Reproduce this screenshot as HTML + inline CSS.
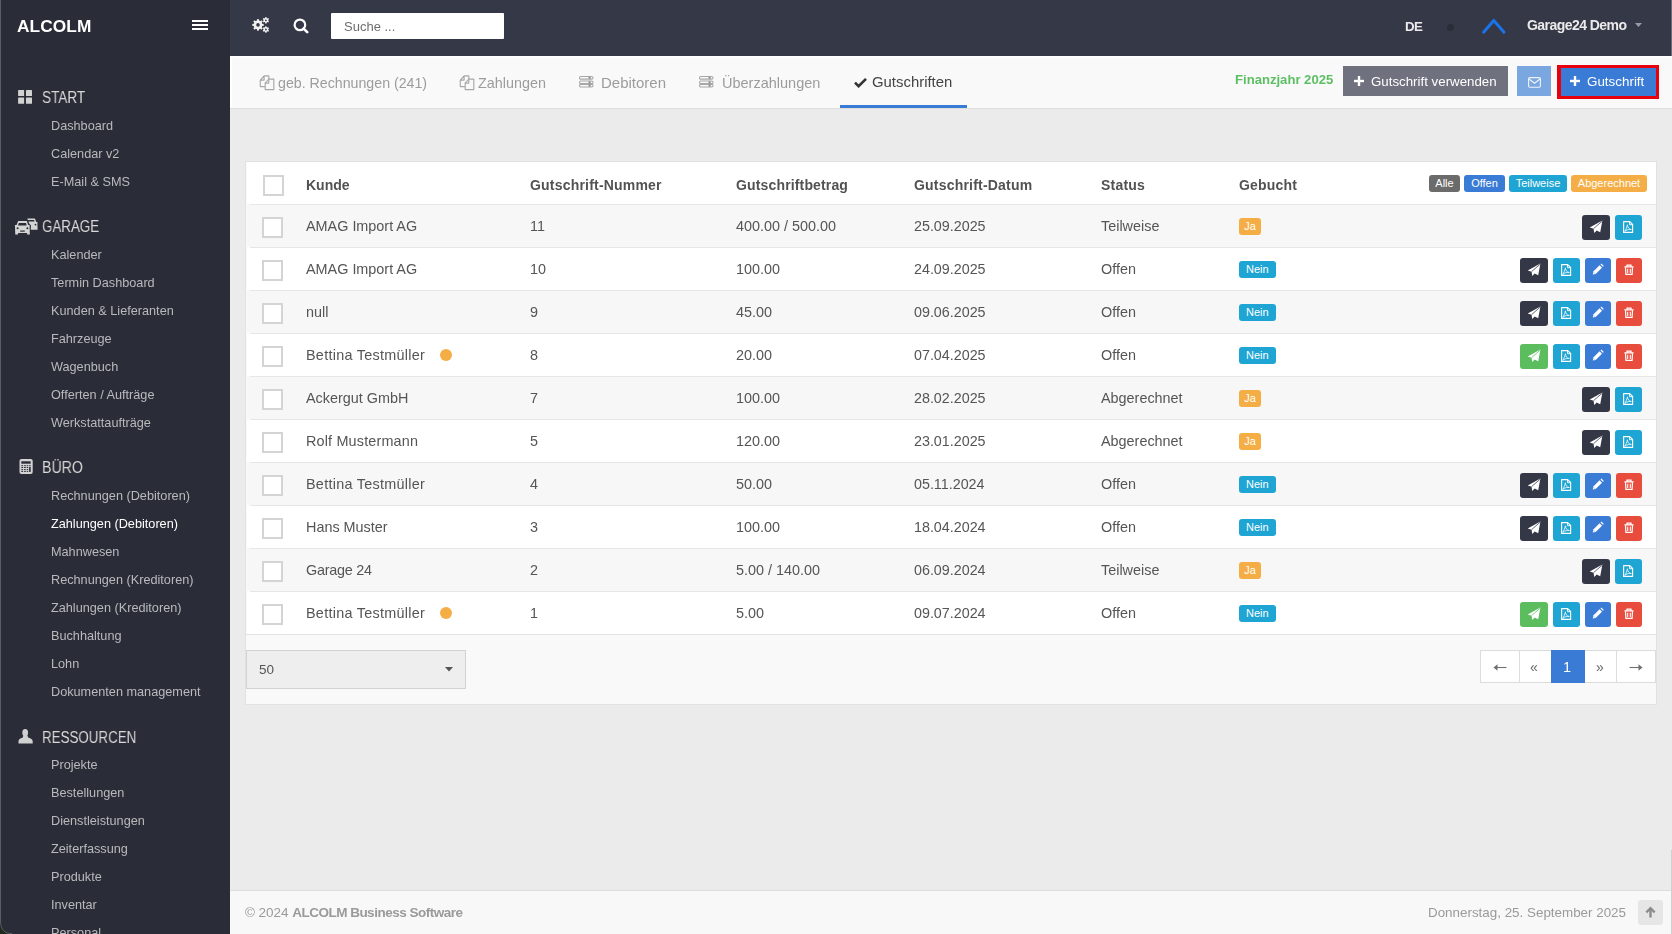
<!DOCTYPE html>
<html><head><meta charset="utf-8"><title>ALCOLM</title>
<style>
html,body{margin:0;padding:0;width:1672px;height:934px;overflow:hidden;background:#ebebeb;}
body{position:relative;font-family:"Liberation Sans", sans-serif;}
.t{position:absolute;white-space:nowrap;will-change:transform;}
.b{position:absolute;}
.bd{color:#fff;text-align:center;font-family:"Liberation Sans", sans-serif;}
</style></head><body>
<div class="b" style="left:0px;top:0px;width:230px;height:934px;background:#2a2d37;"></div>
<div class="b" style="left:0px;top:0px;width:1px;height:934px;background:#5a5d66;"></div>
<svg class="b" style="left:0px;top:922px" width="14" height="12" viewBox="0 0 14 12"><path d="M0 0 V12 H12 C5 12 0.8 8 0.8 0 Z" fill="#1d2a1c"/><path d="M0.6 0 C0.6 8 5 11.6 12 11.6" fill="none" stroke="#5a5d66" stroke-width="1"/></svg>
<div class="t" style="left:17.40px;top:14.01px;font-size:17.3px;line-height:24px;font-weight:bold;color:#ffffff;letter-spacing:0.1px;">ALCOLM</div>
<div class="b" style="left:192px;top:20px;width:16px;height:2px;background:#fff;"></div>
<div class="b" style="left:192px;top:24px;width:16px;height:2px;background:#fff;"></div>
<div class="b" style="left:192px;top:28px;width:16px;height:2px;background:#fff;"></div>
<svg class="b" style="left:18px;top:90px" width="14" height="14" viewBox="0 0 14 14"><g fill="#d2d2d2"><rect x="0.1" y="0" width="6" height="6" rx="0.5"/><rect x="8" y="0" width="6" height="6" rx="0.5"/><rect x="0.1" y="7.6" width="6" height="6.1" rx="0.5"/><rect x="8" y="7.6" width="6" height="6.1" rx="0.5"/></g></svg>
<div class="t" style="left:42.00px;top:87.46px;font-size:16px;line-height:22px;font-weight:normal;color:#d8d8d8;transform:scaleX(0.845);transform-origin:0 0;">START</div>
<div class="t" style="left:50.90px;top:116.90px;font-size:12.7px;line-height:18px;font-weight:normal;color:#b9babd;">Dashboard</div>
<div class="t" style="left:50.90px;top:144.90px;font-size:12.7px;line-height:18px;font-weight:normal;color:#b9babd;">Calendar v2</div>
<div class="t" style="left:50.90px;top:172.90px;font-size:12.7px;line-height:18px;font-weight:normal;color:#b9babd;">E-Mail &amp; SMS</div>
<div class="t" style="left:42.00px;top:216.46px;font-size:16px;line-height:22px;font-weight:normal;color:#d8d8d8;transform:scaleX(0.835);transform-origin:0 0;">GARAGE</div>
<div class="t" style="left:50.90px;top:245.90px;font-size:12.7px;line-height:18px;font-weight:normal;color:#b9babd;">Kalender</div>
<div class="t" style="left:50.90px;top:273.90px;font-size:12.7px;line-height:18px;font-weight:normal;color:#b9babd;">Termin Dashboard</div>
<div class="t" style="left:50.90px;top:301.90px;font-size:12.7px;line-height:18px;font-weight:normal;color:#b9babd;">Kunden &amp; Lieferanten</div>
<div class="t" style="left:50.90px;top:329.90px;font-size:12.7px;line-height:18px;font-weight:normal;color:#b9babd;">Fahrzeuge</div>
<div class="t" style="left:50.90px;top:357.90px;font-size:12.7px;line-height:18px;font-weight:normal;color:#b9babd;">Wagenbuch</div>
<div class="t" style="left:50.90px;top:385.90px;font-size:12.7px;line-height:18px;font-weight:normal;color:#b9babd;">Offerten / Aufträge</div>
<div class="t" style="left:50.90px;top:413.90px;font-size:12.7px;line-height:18px;font-weight:normal;color:#b9babd;">Werkstattaufträge</div>
<div class="t" style="left:42.00px;top:457.46px;font-size:16px;line-height:22px;font-weight:normal;color:#d8d8d8;transform:scaleX(0.885);transform-origin:0 0;">BÜRO</div>
<div class="t" style="left:50.90px;top:486.90px;font-size:12.7px;line-height:18px;font-weight:normal;color:#b9babd;">Rechnungen (Debitoren)</div>
<div class="t" style="left:50.90px;top:514.90px;font-size:12.7px;line-height:18px;font-weight:normal;color:#ffffff;">Zahlungen (Debitoren)</div>
<div class="t" style="left:50.90px;top:542.90px;font-size:12.7px;line-height:18px;font-weight:normal;color:#b9babd;">Mahnwesen</div>
<div class="t" style="left:50.90px;top:570.90px;font-size:12.7px;line-height:18px;font-weight:normal;color:#b9babd;">Rechnungen (Kreditoren)</div>
<div class="t" style="left:50.90px;top:598.90px;font-size:12.7px;line-height:18px;font-weight:normal;color:#b9babd;">Zahlungen (Kreditoren)</div>
<div class="t" style="left:50.90px;top:626.90px;font-size:12.7px;line-height:18px;font-weight:normal;color:#b9babd;">Buchhaltung</div>
<div class="t" style="left:50.90px;top:654.90px;font-size:12.7px;line-height:18px;font-weight:normal;color:#b9babd;">Lohn</div>
<div class="t" style="left:50.90px;top:682.90px;font-size:12.7px;line-height:18px;font-weight:normal;color:#b9babd;">Dokumenten management</div>
<div class="t" style="left:42.00px;top:726.96px;font-size:16px;line-height:22px;font-weight:normal;color:#d8d8d8;transform:scaleX(0.835);transform-origin:0 0;">RESSOURCEN</div>
<div class="t" style="left:50.90px;top:756.40px;font-size:12.7px;line-height:18px;font-weight:normal;color:#b9babd;">Projekte</div>
<div class="t" style="left:50.90px;top:784.40px;font-size:12.7px;line-height:18px;font-weight:normal;color:#b9babd;">Bestellungen</div>
<div class="t" style="left:50.90px;top:812.40px;font-size:12.7px;line-height:18px;font-weight:normal;color:#b9babd;">Dienstleistungen</div>
<div class="t" style="left:50.90px;top:840.40px;font-size:12.7px;line-height:18px;font-weight:normal;color:#b9babd;">Zeiterfassung</div>
<div class="t" style="left:50.90px;top:868.40px;font-size:12.7px;line-height:18px;font-weight:normal;color:#b9babd;">Produkte</div>
<div class="t" style="left:50.90px;top:896.40px;font-size:12.7px;line-height:18px;font-weight:normal;color:#b9babd;">Inventar</div>
<div class="t" style="left:50.90px;top:924.40px;font-size:12.7px;line-height:18px;font-weight:normal;color:#b9babd;">Personal</div>
<svg class="b" style="left:14px;top:218px" width="25" height="18" viewBox="0 0 25 18">
<g fill="#d4d4d4">
<path d="M13.3 0.4 H20.9 L22.3 3.9 H23.6 L23.4 5 L23.6 11.7 H21 V12 L20.9 11.7 H16.5 L14.6 7 L14.6 3.9 Z"/>
</g>
<path d="M3.4 3.4 L4.1 2.5 H13 L16 6.6 L17 7.2 L16.4 16.8 H13 L13 15 H4.1 L4.1 16.8 H0.9 L0.9 6.9 Z" fill="#2a2d37"/>
<g fill="#d4d4d4">
<path d="M4.1 3 H12.8 L14.2 6.9 H15.8 L15.6 8 L15.8 15 V16.5 H13.1 V15 H4.1 V16.5 H1.2 V15 L1 8 L0.8 6.9 H2.6 Z"/>
</g>
<g fill="#2a2d37">
<path d="M4.8 5.1 H12 L12.7 7.4 H4 Z"/>
<circle cx="3.6" cy="10.3" r="1"/><circle cx="13.4" cy="10.3" r="1"/>
<rect x="6.2" y="12.5" width="4.6" height="1.2"/>
<path d="M14.2 2.1 H20 L20.6 3.6 H13.8 Z"/>
<circle cx="21.5" cy="6.6" r="0.9"/>
</g>
</svg>
<svg class="b" style="left:19px;top:458px" width="14" height="17" viewBox="0 0 14 17"><rect x="0.5" y="0.9" width="13.2" height="15.1" rx="2" fill="#d4d4d4"/><g fill="#2a2d37"><rect x="2.3" y="3.3" width="9.4" height="2.4"/><rect x="2.3" y="7.2" width="1.8" height="1"/><rect x="2.3" y="9.0" width="1.8" height="1"/><rect x="2.3" y="11.1" width="1.8" height="1"/><rect x="2.3" y="12.9" width="1.8" height="1"/><rect x="5.1" y="7.2" width="1.7" height="1"/><rect x="5.1" y="9.0" width="1.7" height="1"/><rect x="5.1" y="11.1" width="1.7" height="1"/><rect x="5.1" y="12.9" width="1.7" height="1"/><rect x="7.7" y="7.2" width="1.5" height="1"/><rect x="7.7" y="9.0" width="1.5" height="1"/><rect x="7.7" y="11.1" width="1.5" height="1"/><rect x="7.7" y="12.9" width="1.5" height="1"/><rect x="10.1" y="7.2" width="1.6" height="1"/><rect x="10.1" y="9.0" width="1.6" height="4.9"/></g></svg>
<svg class="b" style="left:18px;top:728.5px" width="15" height="15" viewBox="0 0 15 15">
<ellipse cx="7.2" cy="3.7" rx="2.9" ry="3.7" fill="#d0d0d0"/>
<path d="M5.3 6.5 L4.8 8.6 C2 9.4 0.5 10.5 0.5 12.5 V14.5 H14.7 V12.5 C14.7 10.5 13 9.4 10.2 8.6 L9.4 6.5 Z" fill="#d0d0d0"/>
</svg>
<div class="b" style="left:230px;top:0px;width:1442px;height:56px;background:#353846;"></div>
<svg class="b" style="left:251px;top:16px" width="20" height="18" viewBox="0 0 20 18"><g fill="#f2f2f2"><circle cx="7" cy="8.9" r="4.3"/><rect x="5.95" y="3.2" width="2.1" height="11.4" transform="rotate(0.0 7 8.9)"/><rect x="5.95" y="3.2" width="2.1" height="11.4" transform="rotate(45.0 7 8.9)"/><rect x="5.95" y="3.2" width="2.1" height="11.4" transform="rotate(90.0 7 8.9)"/><rect x="5.95" y="3.2" width="2.1" height="11.4" transform="rotate(135.0 7 8.9)"/><circle cx="14.9" cy="4.3" r="2.4"/><rect x="14.25" y="1.0" width="1.3" height="6.6" transform="rotate(0.0 14.9 4.3)"/><rect x="14.25" y="1.0" width="1.3" height="6.6" transform="rotate(60.0 14.9 4.3)"/><rect x="14.25" y="1.0" width="1.3" height="6.6" transform="rotate(120.0 14.9 4.3)"/><circle cx="14.9" cy="13.5" r="2.4"/><rect x="14.25" y="10.2" width="1.3" height="6.6" transform="rotate(0.0 14.9 13.5)"/><rect x="14.25" y="10.2" width="1.3" height="6.6" transform="rotate(60.0 14.9 13.5)"/><rect x="14.25" y="10.2" width="1.3" height="6.6" transform="rotate(120.0 14.9 13.5)"/></g><circle cx="7" cy="8.9" r="1.8" fill="#353846"/><circle cx="14.9" cy="4.3" r="0.9" fill="#353846"/><circle cx="14.9" cy="13.5" r="0.9" fill="#353846"/></svg>
<svg class="b" style="left:292.5px;top:17.5px" width="17" height="16" viewBox="0 0 17 16">
<circle cx="6.9" cy="6.9" r="5.3" fill="none" stroke="#fff" stroke-width="2.2"/>
<line x1="10.6" y1="10.6" x2="14.2" y2="14.2" stroke="#fff" stroke-width="2.6" stroke-linecap="round"/>
</svg>
<div class="b" style="left:331px;top:13px;width:173px;height:26px;background:#fff;border-radius:1px;"></div>
<div class="t" style="left:343.90px;top:17.90px;font-size:13px;line-height:18px;font-weight:normal;color:#6f6f6f;">Suche ...</div>
<div class="t" style="left:1405.40px;top:17.09px;font-size:13.3px;line-height:19px;font-weight:bold;color:#ebebeb;letter-spacing:-0.6px;">DE</div>
<div class="b" style="left:1446.5px;top:23.5px;width:7px;height:7px;background:#2a2d37;border-radius:50%;"></div>
<svg class="b" style="left:1481px;top:17px" width="26" height="18" viewBox="0 0 26 18">
<path d="M2.6 15.2 L12.8 3.4 L23 15.2" fill="none" stroke="#1a73e8" stroke-width="3" stroke-linecap="round" stroke-linejoin="round"/>
</svg>
<div class="t" style="left:1527.40px;top:15.45px;font-size:14px;line-height:20px;font-weight:bold;color:#ebebeb;letter-spacing:-0.55px;">Garage24 Demo</div>
<svg class="b" style="left:1634.5px;top:23px" width="7" height="4" viewBox="0 0 7 4"><path d="M0 0 H7 L3.5 4 Z" fill="#9a9ca5"/></svg>
<div class="b" style="left:230px;top:56px;width:1442px;height:52px;background:#f9f9f9;"></div>
<div class="b" style="left:230px;top:108px;width:1442px;height:1px;background:#dedede;"></div>
<div class="b" style="left:230px;top:56px;width:2px;height:52px;background:#ffffff;"></div>
<div class="b" style="left:230px;top:56px;width:1442px;height:2px;background:#ffffff;"></div>
<svg class="b" style="left:259px;top:75px" width="16" height="16" viewBox="0 0 16 16">
<path d="M1.3 5.1 L5.1 0.9 H9.8 V11.6 H1.3 Z M1.3 5.1 H5.1 V0.9" fill="none" stroke="#a8a8a8" stroke-width="1.15" stroke-linejoin="round"/>
<path d="M6.2 8.1 L9.8 4.1 H14.8 V14.6 H6.2 Z" fill="#f9f9f9" stroke="#a8a8a8" stroke-width="1.15" stroke-linejoin="round"/>
<path d="M6.2 8.1 H9.8 V4.1" fill="none" stroke="#a8a8a8" stroke-width="1.15" stroke-linejoin="round"/>
</svg>
<div class="t" style="left:278.40px;top:72.88px;font-size:14.2px;line-height:20px;font-weight:normal;color:#9c9c9c;">geb. Rechnungen (241)</div>
<svg class="b" style="left:458.5px;top:75px" width="16" height="16" viewBox="0 0 16 16">
<path d="M1.3 5.1 L5.1 0.9 H9.8 V11.6 H1.3 Z M1.3 5.1 H5.1 V0.9" fill="none" stroke="#a8a8a8" stroke-width="1.15" stroke-linejoin="round"/>
<path d="M6.2 8.1 L9.8 4.1 H14.8 V14.6 H6.2 Z" fill="#f9f9f9" stroke="#a8a8a8" stroke-width="1.15" stroke-linejoin="round"/>
<path d="M6.2 8.1 H9.8 V4.1" fill="none" stroke="#a8a8a8" stroke-width="1.15" stroke-linejoin="round"/>
</svg>
<div class="t" style="left:477.90px;top:72.81px;font-size:14.4px;line-height:20px;font-weight:normal;color:#9c9c9c;">Zahlungen</div>
<svg class="b" style="left:578.6px;top:76px" width="15" height="12" viewBox="0 0 15 12">
<g fill="none" stroke="#a8a8a8" stroke-width="1.1">
<rect x="0.55" y="0.55" width="13.4" height="2.6" rx="1.2"/>
<rect x="0.55" y="5" width="13.4" height="2.6" rx="1.2"/>
<rect x="0.55" y="8.4" width="13.4" height="2.6" rx="1.2"/>
</g>
<g fill="#8a8a8a"><rect x="9.6" y="0.9" width="2" height="1.9"/><rect x="9.6" y="5.35" width="2" height="1.9"/><rect x="9.6" y="8.75" width="2" height="1.9"/></g>
</svg>
<div class="t" style="left:601.40px;top:72.10px;font-size:15px;line-height:21px;font-weight:normal;color:#9c9c9c;">Debitoren</div>
<svg class="b" style="left:698.6px;top:76px" width="15" height="12" viewBox="0 0 15 12">
<g fill="none" stroke="#a8a8a8" stroke-width="1.1">
<rect x="0.55" y="0.55" width="13.4" height="2.6" rx="1.2"/>
<rect x="0.55" y="5" width="13.4" height="2.6" rx="1.2"/>
<rect x="0.55" y="8.4" width="13.4" height="2.6" rx="1.2"/>
</g>
<g fill="#8a8a8a"><rect x="9.6" y="0.9" width="2" height="1.9"/><rect x="9.6" y="5.35" width="2" height="1.9"/><rect x="9.6" y="8.75" width="2" height="1.9"/></g>
</svg>
<div class="t" style="left:721.90px;top:72.78px;font-size:14.5px;line-height:20px;font-weight:normal;color:#9c9c9c;">Überzahlungen</div>
<svg class="b" style="left:854px;top:76.5px" width="13" height="11" viewBox="0 0 13 11">
<path d="M1 5.6 L4.6 9.2 L12 1.8" fill="none" stroke="#333" stroke-width="2.6"/>
</svg>
<div class="t" style="left:872.40px;top:72.14px;font-size:14.9px;line-height:21px;font-weight:normal;color:#444;">Gutschriften</div>
<div class="b" style="left:840px;top:105px;width:127px;height:3px;background:#3a7bd5;"></div>
<div class="t" style="left:1235.40px;top:71.16px;font-size:13.1px;line-height:18px;font-weight:bold;color:#5cbf62;">Finanzjahr 2025</div>
<div class="b" style="left:1343px;top:66px;width:165px;height:30px;background:#6f727e;"></div>
<svg class="b" style="left:1353.5px;top:76px" width="10" height="10" viewBox="0 0 10 10"><rect x="3.8" y="0" width="2.4" height="10" fill="#fff"/><rect x="0" y="3.8" width="10" height="2.4" fill="#fff"/></svg>
<div class="t" style="left:1371.40px;top:71.89px;font-size:13.3px;line-height:19px;font-weight:normal;color:#fff;">Gutschrift verwenden</div>
<div class="b" style="left:1517px;top:66px;width:34px;height:30px;background:#7aa7e0;"></div>
<svg class="b" style="left:1527.5px;top:76.5px" width="13" height="11" viewBox="0 0 13 11">
<rect x="0.6" y="0.6" width="11.8" height="9.6" rx="1.2" fill="none" stroke="#eef3fb" stroke-width="1.15"/>
<path d="M1 2 L6.5 6.2 L12 2" fill="none" stroke="#eef3fb" stroke-width="1.15"/>
</svg>
<div class="b" style="left:1557px;top:64.5px;width:102px;height:34px;background:#e8000c;"></div>
<div class="b" style="left:1560.5px;top:67.5px;width:95px;height:28px;background:#3a7bd5;"></div>
<svg class="b" style="left:1570px;top:76px" width="10" height="10" viewBox="0 0 10 10"><rect x="3.8" y="0" width="2.4" height="10" fill="#fff"/><rect x="0" y="3.8" width="10" height="2.4" fill="#fff"/></svg>
<div class="t" style="left:1587.40px;top:71.86px;font-size:13.4px;line-height:19px;font-weight:normal;color:#fff;">Gutschrift</div>
<div class="b" style="left:230px;top:109px;width:1442px;height:781px;background:#ebebeb;"></div>
<div class="b" style="left:245px;top:161px;width:1412px;height:544px;background:#f9f9f9;box-shadow:0 0 0 1px #e2e2e2 inset;"></div>
<div class="b" style="left:247px;top:162px;width:1409px;height:42px;background:#ffffff;"></div>
<div class="b" style="left:263px;top:175px;width:21px;height:21px;background:#fff;border:2px solid #d4d4d4;box-sizing:border-box;"></div>
<div class="t" style="left:305.90px;top:174.95px;font-size:14px;line-height:20px;font-weight:bold;color:#525252;">Kunde</div>
<div class="t" style="left:530.40px;top:174.95px;font-size:14px;line-height:20px;font-weight:bold;color:#525252;letter-spacing:0.2px;">Gutschrift-Nummer</div>
<div class="t" style="left:736.40px;top:174.95px;font-size:14px;line-height:20px;font-weight:bold;color:#525252;letter-spacing:0.15px;">Gutschriftbetrag</div>
<div class="t" style="left:914.40px;top:174.95px;font-size:14px;line-height:20px;font-weight:bold;color:#525252;letter-spacing:0.2px;">Gutschrift-Datum</div>
<div class="t" style="left:1101.00px;top:174.95px;font-size:14px;line-height:20px;font-weight:bold;color:#525252;letter-spacing:0.2px;">Status</div>
<div class="t" style="left:1239.00px;top:174.95px;font-size:14px;line-height:20px;font-weight:bold;color:#525252;letter-spacing:0.2px;">Gebucht</div>
<div class="b bd" style="left:1429px;top:175px;width:31px;height:17px;background:#6b6b6b;border-radius:3px;font-size:11px;line-height:17px;">Alle</div>
<div class="b bd" style="left:1464px;top:175px;width:41px;height:17px;background:#3a7bd5;border-radius:3px;font-size:11px;line-height:17px;">Offen</div>
<div class="b bd" style="left:1509px;top:175px;width:58px;height:17px;background:#1fa5d4;border-radius:3px;font-size:11px;line-height:17px;">Teilweise</div>
<div class="b bd" style="left:1571px;top:175px;width:76px;height:17px;background:#f5ae45;border-radius:3px;font-size:11px;line-height:17px;">Abgerechnet</div>
<div class="b" style="left:247px;top:204px;width:1409px;height:43px;background:#f7f7f7;"></div>
<div class="b" style="left:250px;top:204px;width:1406px;height:1px;background:#e6e6e6;"></div>
<div class="b" style="left:262px;top:217px;width:21px;height:21px;background:#fff;border:2px solid #d4d4d4;box-sizing:border-box;"></div>
<div class="t" style="left:305.90px;top:216.01px;font-size:14.4px;line-height:20px;font-weight:normal;color:#555;">AMAG Import AG</div>
<div class="t" style="left:530.40px;top:216.01px;font-size:14.4px;line-height:20px;font-weight:normal;color:#555;">11</div>
<div class="t" style="left:736.40px;top:216.01px;font-size:14.4px;line-height:20px;font-weight:normal;color:#555;">400.00 / 500.00</div>
<div class="t" style="left:914.40px;top:216.05px;font-size:14.3px;line-height:20px;font-weight:normal;color:#555;">25.09.2025</div>
<div class="t" style="left:1101.00px;top:216.01px;font-size:14.4px;line-height:20px;font-weight:normal;color:#555;">Teilweise</div>
<div class="b bd" style="left:1239px;top:218px;width:22px;height:17px;background:#f5ae45;border-radius:3px;font-size:11px;line-height:17px;">Ja</div>
<div class="b" style="left:1582px;top:215px;width:28px;height:24.5px;background:#343746;border-radius:3px;"></div>
<svg class="b" style="left:1582px;top:215px" width="28" height="25" viewBox="0 0 28 25">
<path d="M20.4 5.4 L7.7 12.4 L11.6 13.8 L12.2 18.1 L14.7 15.6 L18.2 17.3 Z" fill="#fff"/>
<path d="M11.6 13.6 L20 6.3" stroke="#343746" stroke-width="0.75" fill="none"/>
</svg>
<div class="b" style="left:1615px;top:215px;width:27px;height:24.5px;background:#1fa5d4;border-radius:3px;"></div>
<svg class="b" style="left:1615px;top:215px" width="27" height="25" viewBox="0 0 27 25">
<path d="M8.6 6.6 H14.7 L17.6 9.5 V17.4 H8.6 Z" fill="none" stroke="#fff" stroke-width="1.15" stroke-linejoin="round"/>
<path d="M14.5 6.6 V9.7 H17.6" fill="none" stroke="#fff" stroke-width="0.9"/>
<path d="M9.8 16.2 C11 14.6 11.8 12.6 12.4 9.8 C12.8 12.8 14 14.2 16.3 14.5 C14.5 14.2 12 14.6 9.8 16.2" fill="none" stroke="#fff" stroke-width="0.8"/>
</svg>
<div class="b" style="left:247px;top:247px;width:1409px;height:43px;background:#ffffff;"></div>
<div class="b" style="left:250px;top:247px;width:1406px;height:1px;background:#e6e6e6;"></div>
<div class="b" style="left:262px;top:260px;width:21px;height:21px;background:#fff;border:2px solid #d4d4d4;box-sizing:border-box;"></div>
<div class="t" style="left:305.90px;top:259.01px;font-size:14.4px;line-height:20px;font-weight:normal;color:#555;">AMAG Import AG</div>
<div class="t" style="left:530.40px;top:259.01px;font-size:14.4px;line-height:20px;font-weight:normal;color:#555;">10</div>
<div class="t" style="left:736.40px;top:259.01px;font-size:14.4px;line-height:20px;font-weight:normal;color:#555;">100.00</div>
<div class="t" style="left:914.40px;top:259.05px;font-size:14.3px;line-height:20px;font-weight:normal;color:#555;">24.09.2025</div>
<div class="t" style="left:1101.00px;top:259.01px;font-size:14.4px;line-height:20px;font-weight:normal;color:#555;">Offen</div>
<div class="b bd" style="left:1239px;top:261px;width:36.5px;height:17px;background:#1fa5d4;border-radius:3px;font-size:11px;line-height:17px;">Nein</div>
<div class="b" style="left:1520px;top:258px;width:28px;height:24.5px;background:#343746;border-radius:3px;"></div>
<svg class="b" style="left:1520px;top:258px" width="28" height="25" viewBox="0 0 28 25">
<path d="M20.4 5.4 L7.7 12.4 L11.6 13.8 L12.2 18.1 L14.7 15.6 L18.2 17.3 Z" fill="#fff"/>
<path d="M11.6 13.6 L20 6.3" stroke="#343746" stroke-width="0.75" fill="none"/>
</svg>
<div class="b" style="left:1553px;top:258px;width:27px;height:24.5px;background:#1fa5d4;border-radius:3px;"></div>
<svg class="b" style="left:1553px;top:258px" width="27" height="25" viewBox="0 0 27 25">
<path d="M8.6 6.6 H14.7 L17.6 9.5 V17.4 H8.6 Z" fill="none" stroke="#fff" stroke-width="1.15" stroke-linejoin="round"/>
<path d="M14.5 6.6 V9.7 H17.6" fill="none" stroke="#fff" stroke-width="0.9"/>
<path d="M9.8 16.2 C11 14.6 11.8 12.6 12.4 9.8 C12.8 12.8 14 14.2 16.3 14.5 C14.5 14.2 12 14.6 9.8 16.2" fill="none" stroke="#fff" stroke-width="0.8"/>
</svg>
<div class="b" style="left:1585px;top:258px;width:26px;height:24.5px;background:#3a7bd5;border-radius:3px;"></div>
<svg class="b" style="left:1585px;top:258px" width="26" height="25" viewBox="0 0 26 25">
<path d="M7.8 16.6 L8.3 13.6 L14.6 7.3 L17 9.7 L10.7 16 Z" fill="#fff"/>
<path d="M15.5 6.4 L16.4 5.6 L18.8 8 L17.9 8.8 Z" fill="#fff"/>
<path d="M8.9 14.6 L9.8 15.5" stroke="#3a7bd5" stroke-width="0.8"/>
</svg>
<div class="b" style="left:1616px;top:258px;width:26px;height:24.5px;background:#e84c3d;border-radius:3px;"></div>
<svg class="b" style="left:1616px;top:258px" width="26" height="25" viewBox="0 0 26 25">
<path d="M8.4 8.8 H17.6 M11 8.8 V7.1 H15 V8.8" fill="none" stroke="#fff" stroke-width="1.2"/>
<path d="M9.5 9.3 L9.9 16.4 H16.1 L16.5 9.3" fill="none" stroke="#fff" stroke-width="1.2"/>
<path d="M11.7 10.7 V15 M14.3 10.7 V15" stroke="#fff" stroke-width="1.05"/>
</svg>
<div class="b" style="left:247px;top:290px;width:1409px;height:43px;background:#f7f7f7;"></div>
<div class="b" style="left:250px;top:290px;width:1406px;height:1px;background:#e6e6e6;"></div>
<div class="b" style="left:262px;top:303px;width:21px;height:21px;background:#fff;border:2px solid #d4d4d4;box-sizing:border-box;"></div>
<div class="t" style="left:305.90px;top:302.01px;font-size:14.4px;line-height:20px;font-weight:normal;color:#555;">null</div>
<div class="t" style="left:530.40px;top:302.01px;font-size:14.4px;line-height:20px;font-weight:normal;color:#555;">9</div>
<div class="t" style="left:736.40px;top:302.01px;font-size:14.4px;line-height:20px;font-weight:normal;color:#555;">45.00</div>
<div class="t" style="left:914.40px;top:302.05px;font-size:14.3px;line-height:20px;font-weight:normal;color:#555;">09.06.2025</div>
<div class="t" style="left:1101.00px;top:302.01px;font-size:14.4px;line-height:20px;font-weight:normal;color:#555;">Offen</div>
<div class="b bd" style="left:1239px;top:304px;width:36.5px;height:17px;background:#1fa5d4;border-radius:3px;font-size:11px;line-height:17px;">Nein</div>
<div class="b" style="left:1520px;top:301px;width:28px;height:24.5px;background:#343746;border-radius:3px;"></div>
<svg class="b" style="left:1520px;top:301px" width="28" height="25" viewBox="0 0 28 25">
<path d="M20.4 5.4 L7.7 12.4 L11.6 13.8 L12.2 18.1 L14.7 15.6 L18.2 17.3 Z" fill="#fff"/>
<path d="M11.6 13.6 L20 6.3" stroke="#343746" stroke-width="0.75" fill="none"/>
</svg>
<div class="b" style="left:1553px;top:301px;width:27px;height:24.5px;background:#1fa5d4;border-radius:3px;"></div>
<svg class="b" style="left:1553px;top:301px" width="27" height="25" viewBox="0 0 27 25">
<path d="M8.6 6.6 H14.7 L17.6 9.5 V17.4 H8.6 Z" fill="none" stroke="#fff" stroke-width="1.15" stroke-linejoin="round"/>
<path d="M14.5 6.6 V9.7 H17.6" fill="none" stroke="#fff" stroke-width="0.9"/>
<path d="M9.8 16.2 C11 14.6 11.8 12.6 12.4 9.8 C12.8 12.8 14 14.2 16.3 14.5 C14.5 14.2 12 14.6 9.8 16.2" fill="none" stroke="#fff" stroke-width="0.8"/>
</svg>
<div class="b" style="left:1585px;top:301px;width:26px;height:24.5px;background:#3a7bd5;border-radius:3px;"></div>
<svg class="b" style="left:1585px;top:301px" width="26" height="25" viewBox="0 0 26 25">
<path d="M7.8 16.6 L8.3 13.6 L14.6 7.3 L17 9.7 L10.7 16 Z" fill="#fff"/>
<path d="M15.5 6.4 L16.4 5.6 L18.8 8 L17.9 8.8 Z" fill="#fff"/>
<path d="M8.9 14.6 L9.8 15.5" stroke="#3a7bd5" stroke-width="0.8"/>
</svg>
<div class="b" style="left:1616px;top:301px;width:26px;height:24.5px;background:#e84c3d;border-radius:3px;"></div>
<svg class="b" style="left:1616px;top:301px" width="26" height="25" viewBox="0 0 26 25">
<path d="M8.4 8.8 H17.6 M11 8.8 V7.1 H15 V8.8" fill="none" stroke="#fff" stroke-width="1.2"/>
<path d="M9.5 9.3 L9.9 16.4 H16.1 L16.5 9.3" fill="none" stroke="#fff" stroke-width="1.2"/>
<path d="M11.7 10.7 V15 M14.3 10.7 V15" stroke="#fff" stroke-width="1.05"/>
</svg>
<div class="b" style="left:247px;top:333px;width:1409px;height:43px;background:#ffffff;"></div>
<div class="b" style="left:250px;top:333px;width:1406px;height:1px;background:#e6e6e6;"></div>
<div class="b" style="left:262px;top:346px;width:21px;height:21px;background:#fff;border:2px solid #d4d4d4;box-sizing:border-box;"></div>
<div class="t" style="left:305.90px;top:345.01px;font-size:14.4px;line-height:20px;font-weight:normal;color:#555;letter-spacing:0.27px;">Bettina Testmüller</div>
<div class="b" style="left:439.5px;top:349px;width:12px;height:12px;background:#f5ae45;border-radius:50%;"></div>
<div class="t" style="left:530.40px;top:345.01px;font-size:14.4px;line-height:20px;font-weight:normal;color:#555;">8</div>
<div class="t" style="left:736.40px;top:345.01px;font-size:14.4px;line-height:20px;font-weight:normal;color:#555;">20.00</div>
<div class="t" style="left:914.40px;top:345.05px;font-size:14.3px;line-height:20px;font-weight:normal;color:#555;">07.04.2025</div>
<div class="t" style="left:1101.00px;top:345.01px;font-size:14.4px;line-height:20px;font-weight:normal;color:#555;">Offen</div>
<div class="b bd" style="left:1239px;top:347px;width:36.5px;height:17px;background:#1fa5d4;border-radius:3px;font-size:11px;line-height:17px;">Nein</div>
<div class="b" style="left:1520px;top:344px;width:28px;height:24.5px;background:#5cbd5f;border-radius:3px;"></div>
<svg class="b" style="left:1520px;top:344px" width="28" height="25" viewBox="0 0 28 25">
<path d="M20.4 5.4 L7.7 12.4 L11.6 13.8 L12.2 18.1 L14.7 15.6 L18.2 17.3 Z" fill="#fff"/>
<path d="M11.6 13.6 L20 6.3" stroke="#5cbd5f" stroke-width="0.75" fill="none"/>
</svg>
<div class="b" style="left:1553px;top:344px;width:27px;height:24.5px;background:#1fa5d4;border-radius:3px;"></div>
<svg class="b" style="left:1553px;top:344px" width="27" height="25" viewBox="0 0 27 25">
<path d="M8.6 6.6 H14.7 L17.6 9.5 V17.4 H8.6 Z" fill="none" stroke="#fff" stroke-width="1.15" stroke-linejoin="round"/>
<path d="M14.5 6.6 V9.7 H17.6" fill="none" stroke="#fff" stroke-width="0.9"/>
<path d="M9.8 16.2 C11 14.6 11.8 12.6 12.4 9.8 C12.8 12.8 14 14.2 16.3 14.5 C14.5 14.2 12 14.6 9.8 16.2" fill="none" stroke="#fff" stroke-width="0.8"/>
</svg>
<div class="b" style="left:1585px;top:344px;width:26px;height:24.5px;background:#3a7bd5;border-radius:3px;"></div>
<svg class="b" style="left:1585px;top:344px" width="26" height="25" viewBox="0 0 26 25">
<path d="M7.8 16.6 L8.3 13.6 L14.6 7.3 L17 9.7 L10.7 16 Z" fill="#fff"/>
<path d="M15.5 6.4 L16.4 5.6 L18.8 8 L17.9 8.8 Z" fill="#fff"/>
<path d="M8.9 14.6 L9.8 15.5" stroke="#3a7bd5" stroke-width="0.8"/>
</svg>
<div class="b" style="left:1616px;top:344px;width:26px;height:24.5px;background:#e84c3d;border-radius:3px;"></div>
<svg class="b" style="left:1616px;top:344px" width="26" height="25" viewBox="0 0 26 25">
<path d="M8.4 8.8 H17.6 M11 8.8 V7.1 H15 V8.8" fill="none" stroke="#fff" stroke-width="1.2"/>
<path d="M9.5 9.3 L9.9 16.4 H16.1 L16.5 9.3" fill="none" stroke="#fff" stroke-width="1.2"/>
<path d="M11.7 10.7 V15 M14.3 10.7 V15" stroke="#fff" stroke-width="1.05"/>
</svg>
<div class="b" style="left:247px;top:376px;width:1409px;height:43px;background:#f7f7f7;"></div>
<div class="b" style="left:250px;top:376px;width:1406px;height:1px;background:#e6e6e6;"></div>
<div class="b" style="left:262px;top:389px;width:21px;height:21px;background:#fff;border:2px solid #d4d4d4;box-sizing:border-box;"></div>
<div class="t" style="left:305.90px;top:388.01px;font-size:14.4px;line-height:20px;font-weight:normal;color:#555;">Ackergut GmbH</div>
<div class="t" style="left:530.40px;top:388.01px;font-size:14.4px;line-height:20px;font-weight:normal;color:#555;">7</div>
<div class="t" style="left:736.40px;top:388.01px;font-size:14.4px;line-height:20px;font-weight:normal;color:#555;">100.00</div>
<div class="t" style="left:914.40px;top:388.05px;font-size:14.3px;line-height:20px;font-weight:normal;color:#555;">28.02.2025</div>
<div class="t" style="left:1101.00px;top:388.01px;font-size:14.4px;line-height:20px;font-weight:normal;color:#555;">Abgerechnet</div>
<div class="b bd" style="left:1239px;top:390px;width:22px;height:17px;background:#f5ae45;border-radius:3px;font-size:11px;line-height:17px;">Ja</div>
<div class="b" style="left:1582px;top:387px;width:28px;height:24.5px;background:#343746;border-radius:3px;"></div>
<svg class="b" style="left:1582px;top:387px" width="28" height="25" viewBox="0 0 28 25">
<path d="M20.4 5.4 L7.7 12.4 L11.6 13.8 L12.2 18.1 L14.7 15.6 L18.2 17.3 Z" fill="#fff"/>
<path d="M11.6 13.6 L20 6.3" stroke="#343746" stroke-width="0.75" fill="none"/>
</svg>
<div class="b" style="left:1615px;top:387px;width:27px;height:24.5px;background:#1fa5d4;border-radius:3px;"></div>
<svg class="b" style="left:1615px;top:387px" width="27" height="25" viewBox="0 0 27 25">
<path d="M8.6 6.6 H14.7 L17.6 9.5 V17.4 H8.6 Z" fill="none" stroke="#fff" stroke-width="1.15" stroke-linejoin="round"/>
<path d="M14.5 6.6 V9.7 H17.6" fill="none" stroke="#fff" stroke-width="0.9"/>
<path d="M9.8 16.2 C11 14.6 11.8 12.6 12.4 9.8 C12.8 12.8 14 14.2 16.3 14.5 C14.5 14.2 12 14.6 9.8 16.2" fill="none" stroke="#fff" stroke-width="0.8"/>
</svg>
<div class="b" style="left:247px;top:419px;width:1409px;height:43px;background:#ffffff;"></div>
<div class="b" style="left:250px;top:419px;width:1406px;height:1px;background:#e6e6e6;"></div>
<div class="b" style="left:262px;top:432px;width:21px;height:21px;background:#fff;border:2px solid #d4d4d4;box-sizing:border-box;"></div>
<div class="t" style="left:305.90px;top:431.01px;font-size:14.4px;line-height:20px;font-weight:normal;color:#555;letter-spacing:0.17px;">Rolf Mustermann</div>
<div class="t" style="left:530.40px;top:431.01px;font-size:14.4px;line-height:20px;font-weight:normal;color:#555;">5</div>
<div class="t" style="left:736.40px;top:431.01px;font-size:14.4px;line-height:20px;font-weight:normal;color:#555;">120.00</div>
<div class="t" style="left:914.40px;top:431.05px;font-size:14.3px;line-height:20px;font-weight:normal;color:#555;">23.01.2025</div>
<div class="t" style="left:1101.00px;top:431.01px;font-size:14.4px;line-height:20px;font-weight:normal;color:#555;">Abgerechnet</div>
<div class="b bd" style="left:1239px;top:433px;width:22px;height:17px;background:#f5ae45;border-radius:3px;font-size:11px;line-height:17px;">Ja</div>
<div class="b" style="left:1582px;top:430px;width:28px;height:24.5px;background:#343746;border-radius:3px;"></div>
<svg class="b" style="left:1582px;top:430px" width="28" height="25" viewBox="0 0 28 25">
<path d="M20.4 5.4 L7.7 12.4 L11.6 13.8 L12.2 18.1 L14.7 15.6 L18.2 17.3 Z" fill="#fff"/>
<path d="M11.6 13.6 L20 6.3" stroke="#343746" stroke-width="0.75" fill="none"/>
</svg>
<div class="b" style="left:1615px;top:430px;width:27px;height:24.5px;background:#1fa5d4;border-radius:3px;"></div>
<svg class="b" style="left:1615px;top:430px" width="27" height="25" viewBox="0 0 27 25">
<path d="M8.6 6.6 H14.7 L17.6 9.5 V17.4 H8.6 Z" fill="none" stroke="#fff" stroke-width="1.15" stroke-linejoin="round"/>
<path d="M14.5 6.6 V9.7 H17.6" fill="none" stroke="#fff" stroke-width="0.9"/>
<path d="M9.8 16.2 C11 14.6 11.8 12.6 12.4 9.8 C12.8 12.8 14 14.2 16.3 14.5 C14.5 14.2 12 14.6 9.8 16.2" fill="none" stroke="#fff" stroke-width="0.8"/>
</svg>
<div class="b" style="left:247px;top:462px;width:1409px;height:43px;background:#f7f7f7;"></div>
<div class="b" style="left:250px;top:462px;width:1406px;height:1px;background:#e6e6e6;"></div>
<div class="b" style="left:262px;top:475px;width:21px;height:21px;background:#fff;border:2px solid #d4d4d4;box-sizing:border-box;"></div>
<div class="t" style="left:305.90px;top:474.01px;font-size:14.4px;line-height:20px;font-weight:normal;color:#555;letter-spacing:0.27px;">Bettina Testmüller</div>
<div class="t" style="left:530.40px;top:474.01px;font-size:14.4px;line-height:20px;font-weight:normal;color:#555;">4</div>
<div class="t" style="left:736.40px;top:474.01px;font-size:14.4px;line-height:20px;font-weight:normal;color:#555;">50.00</div>
<div class="t" style="left:914.40px;top:474.05px;font-size:14.3px;line-height:20px;font-weight:normal;color:#555;">05.11.2024</div>
<div class="t" style="left:1101.00px;top:474.01px;font-size:14.4px;line-height:20px;font-weight:normal;color:#555;">Offen</div>
<div class="b bd" style="left:1239px;top:476px;width:36.5px;height:17px;background:#1fa5d4;border-radius:3px;font-size:11px;line-height:17px;">Nein</div>
<div class="b" style="left:1520px;top:473px;width:28px;height:24.5px;background:#343746;border-radius:3px;"></div>
<svg class="b" style="left:1520px;top:473px" width="28" height="25" viewBox="0 0 28 25">
<path d="M20.4 5.4 L7.7 12.4 L11.6 13.8 L12.2 18.1 L14.7 15.6 L18.2 17.3 Z" fill="#fff"/>
<path d="M11.6 13.6 L20 6.3" stroke="#343746" stroke-width="0.75" fill="none"/>
</svg>
<div class="b" style="left:1553px;top:473px;width:27px;height:24.5px;background:#1fa5d4;border-radius:3px;"></div>
<svg class="b" style="left:1553px;top:473px" width="27" height="25" viewBox="0 0 27 25">
<path d="M8.6 6.6 H14.7 L17.6 9.5 V17.4 H8.6 Z" fill="none" stroke="#fff" stroke-width="1.15" stroke-linejoin="round"/>
<path d="M14.5 6.6 V9.7 H17.6" fill="none" stroke="#fff" stroke-width="0.9"/>
<path d="M9.8 16.2 C11 14.6 11.8 12.6 12.4 9.8 C12.8 12.8 14 14.2 16.3 14.5 C14.5 14.2 12 14.6 9.8 16.2" fill="none" stroke="#fff" stroke-width="0.8"/>
</svg>
<div class="b" style="left:1585px;top:473px;width:26px;height:24.5px;background:#3a7bd5;border-radius:3px;"></div>
<svg class="b" style="left:1585px;top:473px" width="26" height="25" viewBox="0 0 26 25">
<path d="M7.8 16.6 L8.3 13.6 L14.6 7.3 L17 9.7 L10.7 16 Z" fill="#fff"/>
<path d="M15.5 6.4 L16.4 5.6 L18.8 8 L17.9 8.8 Z" fill="#fff"/>
<path d="M8.9 14.6 L9.8 15.5" stroke="#3a7bd5" stroke-width="0.8"/>
</svg>
<div class="b" style="left:1616px;top:473px;width:26px;height:24.5px;background:#e84c3d;border-radius:3px;"></div>
<svg class="b" style="left:1616px;top:473px" width="26" height="25" viewBox="0 0 26 25">
<path d="M8.4 8.8 H17.6 M11 8.8 V7.1 H15 V8.8" fill="none" stroke="#fff" stroke-width="1.2"/>
<path d="M9.5 9.3 L9.9 16.4 H16.1 L16.5 9.3" fill="none" stroke="#fff" stroke-width="1.2"/>
<path d="M11.7 10.7 V15 M14.3 10.7 V15" stroke="#fff" stroke-width="1.05"/>
</svg>
<div class="b" style="left:247px;top:505px;width:1409px;height:43px;background:#ffffff;"></div>
<div class="b" style="left:250px;top:505px;width:1406px;height:1px;background:#e6e6e6;"></div>
<div class="b" style="left:262px;top:518px;width:21px;height:21px;background:#fff;border:2px solid #d4d4d4;box-sizing:border-box;"></div>
<div class="t" style="left:305.90px;top:517.01px;font-size:14.4px;line-height:20px;font-weight:normal;color:#555;">Hans Muster</div>
<div class="t" style="left:530.40px;top:517.01px;font-size:14.4px;line-height:20px;font-weight:normal;color:#555;">3</div>
<div class="t" style="left:736.40px;top:517.01px;font-size:14.4px;line-height:20px;font-weight:normal;color:#555;">100.00</div>
<div class="t" style="left:914.40px;top:517.05px;font-size:14.3px;line-height:20px;font-weight:normal;color:#555;">18.04.2024</div>
<div class="t" style="left:1101.00px;top:517.01px;font-size:14.4px;line-height:20px;font-weight:normal;color:#555;">Offen</div>
<div class="b bd" style="left:1239px;top:519px;width:36.5px;height:17px;background:#1fa5d4;border-radius:3px;font-size:11px;line-height:17px;">Nein</div>
<div class="b" style="left:1520px;top:516px;width:28px;height:24.5px;background:#343746;border-radius:3px;"></div>
<svg class="b" style="left:1520px;top:516px" width="28" height="25" viewBox="0 0 28 25">
<path d="M20.4 5.4 L7.7 12.4 L11.6 13.8 L12.2 18.1 L14.7 15.6 L18.2 17.3 Z" fill="#fff"/>
<path d="M11.6 13.6 L20 6.3" stroke="#343746" stroke-width="0.75" fill="none"/>
</svg>
<div class="b" style="left:1553px;top:516px;width:27px;height:24.5px;background:#1fa5d4;border-radius:3px;"></div>
<svg class="b" style="left:1553px;top:516px" width="27" height="25" viewBox="0 0 27 25">
<path d="M8.6 6.6 H14.7 L17.6 9.5 V17.4 H8.6 Z" fill="none" stroke="#fff" stroke-width="1.15" stroke-linejoin="round"/>
<path d="M14.5 6.6 V9.7 H17.6" fill="none" stroke="#fff" stroke-width="0.9"/>
<path d="M9.8 16.2 C11 14.6 11.8 12.6 12.4 9.8 C12.8 12.8 14 14.2 16.3 14.5 C14.5 14.2 12 14.6 9.8 16.2" fill="none" stroke="#fff" stroke-width="0.8"/>
</svg>
<div class="b" style="left:1585px;top:516px;width:26px;height:24.5px;background:#3a7bd5;border-radius:3px;"></div>
<svg class="b" style="left:1585px;top:516px" width="26" height="25" viewBox="0 0 26 25">
<path d="M7.8 16.6 L8.3 13.6 L14.6 7.3 L17 9.7 L10.7 16 Z" fill="#fff"/>
<path d="M15.5 6.4 L16.4 5.6 L18.8 8 L17.9 8.8 Z" fill="#fff"/>
<path d="M8.9 14.6 L9.8 15.5" stroke="#3a7bd5" stroke-width="0.8"/>
</svg>
<div class="b" style="left:1616px;top:516px;width:26px;height:24.5px;background:#e84c3d;border-radius:3px;"></div>
<svg class="b" style="left:1616px;top:516px" width="26" height="25" viewBox="0 0 26 25">
<path d="M8.4 8.8 H17.6 M11 8.8 V7.1 H15 V8.8" fill="none" stroke="#fff" stroke-width="1.2"/>
<path d="M9.5 9.3 L9.9 16.4 H16.1 L16.5 9.3" fill="none" stroke="#fff" stroke-width="1.2"/>
<path d="M11.7 10.7 V15 M14.3 10.7 V15" stroke="#fff" stroke-width="1.05"/>
</svg>
<div class="b" style="left:247px;top:548px;width:1409px;height:43px;background:#f7f7f7;"></div>
<div class="b" style="left:250px;top:548px;width:1406px;height:1px;background:#e6e6e6;"></div>
<div class="b" style="left:262px;top:561px;width:21px;height:21px;background:#fff;border:2px solid #d4d4d4;box-sizing:border-box;"></div>
<div class="t" style="left:305.90px;top:560.01px;font-size:14.4px;line-height:20px;font-weight:normal;color:#555;letter-spacing:-0.25px;">Garage 24</div>
<div class="t" style="left:530.40px;top:560.01px;font-size:14.4px;line-height:20px;font-weight:normal;color:#555;">2</div>
<div class="t" style="left:736.40px;top:560.01px;font-size:14.4px;line-height:20px;font-weight:normal;color:#555;">5.00 / 140.00</div>
<div class="t" style="left:914.40px;top:560.05px;font-size:14.3px;line-height:20px;font-weight:normal;color:#555;">06.09.2024</div>
<div class="t" style="left:1101.00px;top:560.01px;font-size:14.4px;line-height:20px;font-weight:normal;color:#555;">Teilweise</div>
<div class="b bd" style="left:1239px;top:562px;width:22px;height:17px;background:#f5ae45;border-radius:3px;font-size:11px;line-height:17px;">Ja</div>
<div class="b" style="left:1582px;top:559px;width:28px;height:24.5px;background:#343746;border-radius:3px;"></div>
<svg class="b" style="left:1582px;top:559px" width="28" height="25" viewBox="0 0 28 25">
<path d="M20.4 5.4 L7.7 12.4 L11.6 13.8 L12.2 18.1 L14.7 15.6 L18.2 17.3 Z" fill="#fff"/>
<path d="M11.6 13.6 L20 6.3" stroke="#343746" stroke-width="0.75" fill="none"/>
</svg>
<div class="b" style="left:1615px;top:559px;width:27px;height:24.5px;background:#1fa5d4;border-radius:3px;"></div>
<svg class="b" style="left:1615px;top:559px" width="27" height="25" viewBox="0 0 27 25">
<path d="M8.6 6.6 H14.7 L17.6 9.5 V17.4 H8.6 Z" fill="none" stroke="#fff" stroke-width="1.15" stroke-linejoin="round"/>
<path d="M14.5 6.6 V9.7 H17.6" fill="none" stroke="#fff" stroke-width="0.9"/>
<path d="M9.8 16.2 C11 14.6 11.8 12.6 12.4 9.8 C12.8 12.8 14 14.2 16.3 14.5 C14.5 14.2 12 14.6 9.8 16.2" fill="none" stroke="#fff" stroke-width="0.8"/>
</svg>
<div class="b" style="left:247px;top:591px;width:1409px;height:43px;background:#ffffff;"></div>
<div class="b" style="left:250px;top:591px;width:1406px;height:1px;background:#e6e6e6;"></div>
<div class="b" style="left:262px;top:604px;width:21px;height:21px;background:#fff;border:2px solid #d4d4d4;box-sizing:border-box;"></div>
<div class="t" style="left:305.90px;top:603.01px;font-size:14.4px;line-height:20px;font-weight:normal;color:#555;letter-spacing:0.27px;">Bettina Testmüller</div>
<div class="b" style="left:439.5px;top:607px;width:12px;height:12px;background:#f5ae45;border-radius:50%;"></div>
<div class="t" style="left:530.40px;top:603.01px;font-size:14.4px;line-height:20px;font-weight:normal;color:#555;">1</div>
<div class="t" style="left:736.40px;top:603.01px;font-size:14.4px;line-height:20px;font-weight:normal;color:#555;">5.00</div>
<div class="t" style="left:914.40px;top:603.05px;font-size:14.3px;line-height:20px;font-weight:normal;color:#555;">09.07.2024</div>
<div class="t" style="left:1101.00px;top:603.01px;font-size:14.4px;line-height:20px;font-weight:normal;color:#555;">Offen</div>
<div class="b bd" style="left:1239px;top:605px;width:36.5px;height:17px;background:#1fa5d4;border-radius:3px;font-size:11px;line-height:17px;">Nein</div>
<div class="b" style="left:1520px;top:602px;width:28px;height:24.5px;background:#5cbd5f;border-radius:3px;"></div>
<svg class="b" style="left:1520px;top:602px" width="28" height="25" viewBox="0 0 28 25">
<path d="M20.4 5.4 L7.7 12.4 L11.6 13.8 L12.2 18.1 L14.7 15.6 L18.2 17.3 Z" fill="#fff"/>
<path d="M11.6 13.6 L20 6.3" stroke="#5cbd5f" stroke-width="0.75" fill="none"/>
</svg>
<div class="b" style="left:1553px;top:602px;width:27px;height:24.5px;background:#1fa5d4;border-radius:3px;"></div>
<svg class="b" style="left:1553px;top:602px" width="27" height="25" viewBox="0 0 27 25">
<path d="M8.6 6.6 H14.7 L17.6 9.5 V17.4 H8.6 Z" fill="none" stroke="#fff" stroke-width="1.15" stroke-linejoin="round"/>
<path d="M14.5 6.6 V9.7 H17.6" fill="none" stroke="#fff" stroke-width="0.9"/>
<path d="M9.8 16.2 C11 14.6 11.8 12.6 12.4 9.8 C12.8 12.8 14 14.2 16.3 14.5 C14.5 14.2 12 14.6 9.8 16.2" fill="none" stroke="#fff" stroke-width="0.8"/>
</svg>
<div class="b" style="left:1585px;top:602px;width:26px;height:24.5px;background:#3a7bd5;border-radius:3px;"></div>
<svg class="b" style="left:1585px;top:602px" width="26" height="25" viewBox="0 0 26 25">
<path d="M7.8 16.6 L8.3 13.6 L14.6 7.3 L17 9.7 L10.7 16 Z" fill="#fff"/>
<path d="M15.5 6.4 L16.4 5.6 L18.8 8 L17.9 8.8 Z" fill="#fff"/>
<path d="M8.9 14.6 L9.8 15.5" stroke="#3a7bd5" stroke-width="0.8"/>
</svg>
<div class="b" style="left:1616px;top:602px;width:26px;height:24.5px;background:#e84c3d;border-radius:3px;"></div>
<svg class="b" style="left:1616px;top:602px" width="26" height="25" viewBox="0 0 26 25">
<path d="M8.4 8.8 H17.6 M11 8.8 V7.1 H15 V8.8" fill="none" stroke="#fff" stroke-width="1.2"/>
<path d="M9.5 9.3 L9.9 16.4 H16.1 L16.5 9.3" fill="none" stroke="#fff" stroke-width="1.2"/>
<path d="M11.7 10.7 V15 M14.3 10.7 V15" stroke="#fff" stroke-width="1.05"/>
</svg>
<div class="b" style="left:246px;top:634px;width:1410px;height:1px;background:#e2e2e2;"></div>
<div class="b" style="left:246px;top:650px;width:220px;height:39px;background:#eeeeee;border:1px solid #d2d2d2;box-sizing:border-box;"></div>
<div class="t" style="left:258.90px;top:660.32px;font-size:13.5px;line-height:19px;font-weight:normal;color:#555;">50</div>
<svg class="b" style="left:445px;top:667px" width="8" height="4.5" viewBox="0 0 8 4.5"><path d="M0 0 H8 L4 4.5 Z" fill="#555"/></svg>
<div class="b" style="left:1480px;top:650px;width:176px;height:33px;background:#fff;border:1px solid #dcdcdc;box-sizing:border-box;"></div>
<div class="b" style="left:1519px;top:650px;width:1px;height:33px;background:#dcdcdc;"></div>
<div class="b" style="left:1616px;top:650px;width:1px;height:33px;background:#dcdcdc;"></div>
<div class="b" style="left:1551px;top:650px;width:34px;height:33px;background:#3a7bd5;"></div>
<svg class="b" style="left:1493px;top:663px" width="14" height="9" viewBox="0 0 14 9"><path d="M13.5 4.5 H3" stroke="#707070" stroke-width="1.1"/><path d="M0.5 4.5 L4.5 1.2 V7.8 Z" fill="#707070"/></svg>
<div class="t" style="left:1530.40px;top:656.65px;font-size:14px;line-height:20px;font-weight:normal;color:#666;">«</div>
<div class="t" style="left:1562.90px;top:656.98px;font-size:14.5px;line-height:20px;font-weight:normal;color:#fff;">1</div>
<div class="t" style="left:1595.90px;top:656.65px;font-size:14px;line-height:20px;font-weight:normal;color:#666;">»</div>
<svg class="b" style="left:1628.5px;top:663px" width="14" height="9" viewBox="0 0 14 9"><path d="M0.5 4.5 H11" stroke="#707070" stroke-width="1.1"/><path d="M13.5 4.5 L9.5 1.2 V7.8 Z" fill="#707070"/></svg>
<div class="b" style="left:230px;top:890px;width:1442px;height:44px;background:#f8f8f8;"></div>
<div class="b" style="left:230px;top:890px;width:1442px;height:1px;background:#dddddd;"></div>
<div class="t" style="left:244.90px;top:903.32px;font-size:13.5px;line-height:19px;font-weight:normal;color:#9a9a9a;letter-spacing:-0.05px;">© 2024 <b style="font-weight:bold;letter-spacing:-0.5px">ALCOLM Business Software</b></div>
<div class="t" style="right:45.5px;top:903.36px;font-size:13.4px;line-height:19px;font-weight:normal;color:#9a9a9a;">Donnerstag, 25. September 2025</div>
<div class="b" style="left:1638px;top:900px;width:25px;height:25px;background:#e6e6e6;border-radius:3px;"></div>
<svg class="b" style="left:1645px;top:906px" width="11" height="12" viewBox="0 0 11 12"><path d="M5.5 0.5 L10.5 5.5 L8.8 7.2 L6.7 5 V11.5 H4.3 V5 L2.2 7.2 L0.5 5.5 Z" fill="#8c8c8c"/></svg>
<div class="b" style="left:1671px;top:0px;width:1px;height:56px;background:#6a6c78;"></div>
<div class="b" style="left:1671px;top:850px;width:1px;height:84px;background:#d0d0d0;"></div>
</body></html>
